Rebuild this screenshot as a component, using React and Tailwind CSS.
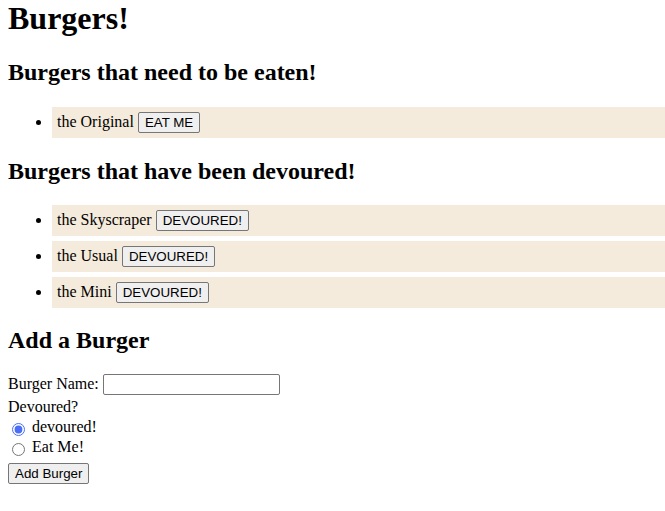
import React from "react";

const btn =
  "inline-block bg-[#efefef] border border-[#767676] rounded-[2px] px-[6px] py-[2px] text-[13.333px] leading-[normal] text-black align-baseline [font-family:'Liberation_Sans',Arial,sans-serif]";

function Item({ name, label }) {
  return (
    <li className="bg-[#f5ebdc] ml-1 py-[5px] pl-[5px] mb-[5px]">
      {name} <button type="button" className={btn}>{label}</button>
    </li>
  );
}

export default function App() {
  return (
    <div className="pl-2 pb-2 text-[16px] leading-[normal] text-black bg-white min-h-[511px] [font-family:'Liberation_Serif','Times_New_Roman',serif]">
      <h1 className="text-[32px] font-bold mb-[22.3px]">Burgers!</h1>
      <h2 className="text-[24px] font-bold mb-[20.3px]">Burgers that need to be eaten!</h2>
      <ul className="list-disc pl-10">
        <Item name="the Original" label="EAT ME" />
      </ul>
      <h2 className="text-[24px] font-bold mt-[20.9px] mb-[19.9px]">Burgers that have been devoured!</h2>
      <ul className="list-disc pl-10">
        <Item name="the Skyscraper" label="DEVOURED!" />
        <Item name="the Usual" label="DEVOURED!" />
        <Item name="the Mini" label="DEVOURED!" />
      </ul>
      <h2 className="text-[24px] font-bold mt-[19px] mb-[19.5px]">Add a Burger</h2>
      <form>
        <div>
          <label>Burger Name:</label>{" "}
          <input
            type="text"
            className="w-[177px] border border-[#767676] rounded-[2px] px-[2px] py-[2px] leading-[normal] align-baseline text-[13.333px] [font-family:'Liberation_Sans',Arial,sans-serif]"
          />
        </div>
        <div className="mt-[3px]">
          <label>Devoured?</label>
        </div>
        <label className="flex items-center h-[20px] mt-[1.5px]">
          <input type="radio" name="dev" defaultChecked className="w-[13px] h-[13px] mt-[4px] ml-[4px] mr-[7px] accent-[#4a6ef5]" />
          <span>devoured!</span>
        </label>
        <label className="flex items-center h-[20px]">
          <input type="radio" name="dev" className="w-[13px] h-[13px] mt-[4px] ml-[4px] mr-[7px] accent-[#4a6ef5]" />
          <span>Eat Me!</span>
        </label>
        <div className="mt-[6px]">
          <button type="button" className={btn}>Add Burger</button>
        </div>
      </form>
    </div>
  );
}
